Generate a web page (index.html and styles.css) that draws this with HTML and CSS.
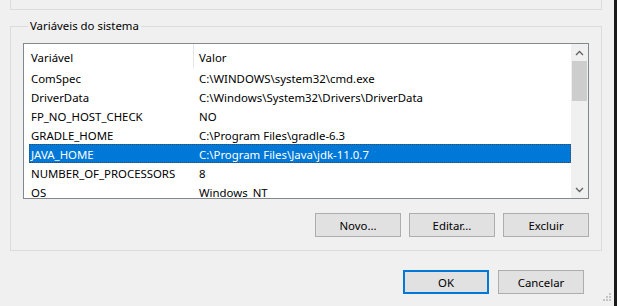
FILE: index.html
```html
<!DOCTYPE html>
<html lang="pt-BR">
<head>
<meta charset="utf-8">
<title>Variáveis de Ambiente</title>
<link rel="stylesheet" href="styles.css">
</head>
<body>
<div class="dialog">
  <div class="user-group"></div>

  <fieldset class="sys-group">
    <legend>Variáveis do sistema</legend>
    <div class="list">
      <div class="list-view">
        <div class="row header">
          <div class="c1">Variável</div>
          <div class="c2">Valor</div>
        </div>
        <div class="row"><div class="c1">ComSpec</div><div class="c2">C:\WINDOWS\system32\cmd.exe</div></div>
        <div class="row"><div class="c1">DriverData</div><div class="c2">C:\Windows\System32\Drivers\DriverData</div></div>
        <div class="row"><div class="c1">FP_NO_HOST_CHECK</div><div class="c2">NO</div></div>
        <div class="row"><div class="c1">GRADLE_HOME</div><div class="c2">C:\Program Files\gradle-6.3</div></div>
        <div class="row selected"><div class="c1">JAVA_HOME</div><div class="c2">C:\Program Files\Java\jdk-11.0.7</div></div>
        <div class="row"><div class="c1">NUMBER_OF_PROCESSORS</div><div class="c2">8</div></div>
        <div class="row"><div class="c1">OS</div><div class="c2">Windows_NT</div></div>
      </div>
      <div class="scrollbar">
        <div class="arrow">
          <svg width="9" height="6" viewBox="0 0 9 6"><path d="M1 5 L4.5 1.5 L8 5" fill="none" stroke="#606060" stroke-width="1.3"/></svg>
        </div>
        <div class="track"><div class="thumb"></div></div>
        <div class="arrow">
          <svg width="9" height="6" viewBox="0 0 9 6"><path d="M1 1 L4.5 4.5 L8 1" fill="none" stroke="#606060" stroke-width="1.3"/></svg>
        </div>
      </div>
    </div>
    <div class="actions">
      <button class="btn">Novo...</button>
      <button class="btn">Editar...</button>
      <button class="btn">Excluir</button>
    </div>
  </fieldset>

  <div class="footer">
    <button class="btn default">OK</button>
    <button class="btn">Cancelar</button>
  </div>

  <svg class="grip" width="12" height="12" viewBox="0 0 12 12">
    <rect x="9" y="0" width="2" height="2" fill="#c4c4c4"/>
    <rect x="6" y="3" width="2" height="2" fill="#c4c4c4"/>
    <rect x="9" y="3" width="2" height="2" fill="#c4c4c4"/>
    <rect x="3" y="6" width="2" height="2" fill="#c4c4c4"/>
    <rect x="6" y="6" width="2" height="2" fill="#c4c4c4"/>
    <rect x="9" y="6" width="2" height="2" fill="#c4c4c4"/>
  </svg>
</div>
<div class="edge"></div>
</body>
</html>
```

FILE: styles.css
```css
* { box-sizing: border-box; }

html, body {
  margin: 0;
  height: 100%;
}

body {
  display: flex;
  background: #f0f0f0;
  font-family: "Noto Sans", "Liberation Sans", sans-serif;
  font-size: 11.4px;
  color: #000;
  overflow: hidden;
}

.dialog {
  flex: 1;
  position: relative;
  padding: 0 12px 0 10px;
}

.edge {
  width: 3px;
  background: #1a1a1a;
}

.user-group {
  height: 10px;
  border: 1px solid #dcdcdc;
  border-top: none;
}

.sys-group {
  margin: 8px 0 0 0;
  padding: 0 12px 13px 12px;
  border: 1px solid #dcdcdc;
  min-width: 0;
}

.sys-group legend {
  padding: 0 2px;
  margin-left: 5px;
  line-height: 16px;
}

.list {
  display: flex;
  margin-top: 9px;
  height: 156px;
  border: 1px solid #828790;
  background: #fff;
  overflow: hidden;
}

.list-view {
  flex: 1;
  overflow: hidden;
  padding-left: 5px;
}

.row {
  display: flex;
  height: 19px;
  padding-top: 2px;
  align-items: center;
  white-space: nowrap;
}

.row.header {
  height: 24px;
  padding-top: 0;
}

.row .c1 {
  width: 164px;
  flex: none;
  padding-left: 2px;
}

.row .c2 {
  padding-left: 6px;
  flex: 1;
}

.row.header .c1 {
  padding-top: 2px;
}

.row.header .c2 {
  align-self: stretch;
  display: flex;
  align-items: center;
  border-left: 1px solid #e5e5e5;
  padding-left: 5px;
  padding-top: 2px;
}

.row.selected {
  background: #0078d7;
  color: #fff;
  outline: 1px dotted #3a4a5a;
  outline-offset: -1px;
}

.scrollbar {
  width: 17px;
  flex: none;
  display: flex;
  flex-direction: column;
  background: #f0f0f0;
}

.arrow {
  height: 17px;
  display: flex;
  align-items: center;
  justify-content: center;
}

.track {
  flex: 1;
  padding: 0 1px;
}

.thumb {
  height: 40px;
  background: #cdcdcd;
}

.actions {
  display: flex;
  justify-content: flex-end;
  gap: 8px;
  margin-top: 14px;
}

.btn {
  width: 86px;
  height: 24px;
  font: inherit;
  color: #000;
  background: #e1e1e1;
  border: 1px solid #adadad;
  padding: 0;
}

.btn.default {
  border: 2px solid #0078d7;
}

.footer {
  display: flex;
  justify-content: flex-end;
  gap: 9px;
  margin-top: 19px;
  padding-right: 18px;
}

.grip {
  position: absolute;
  right: 2px;
  bottom: 1px;
}
```
